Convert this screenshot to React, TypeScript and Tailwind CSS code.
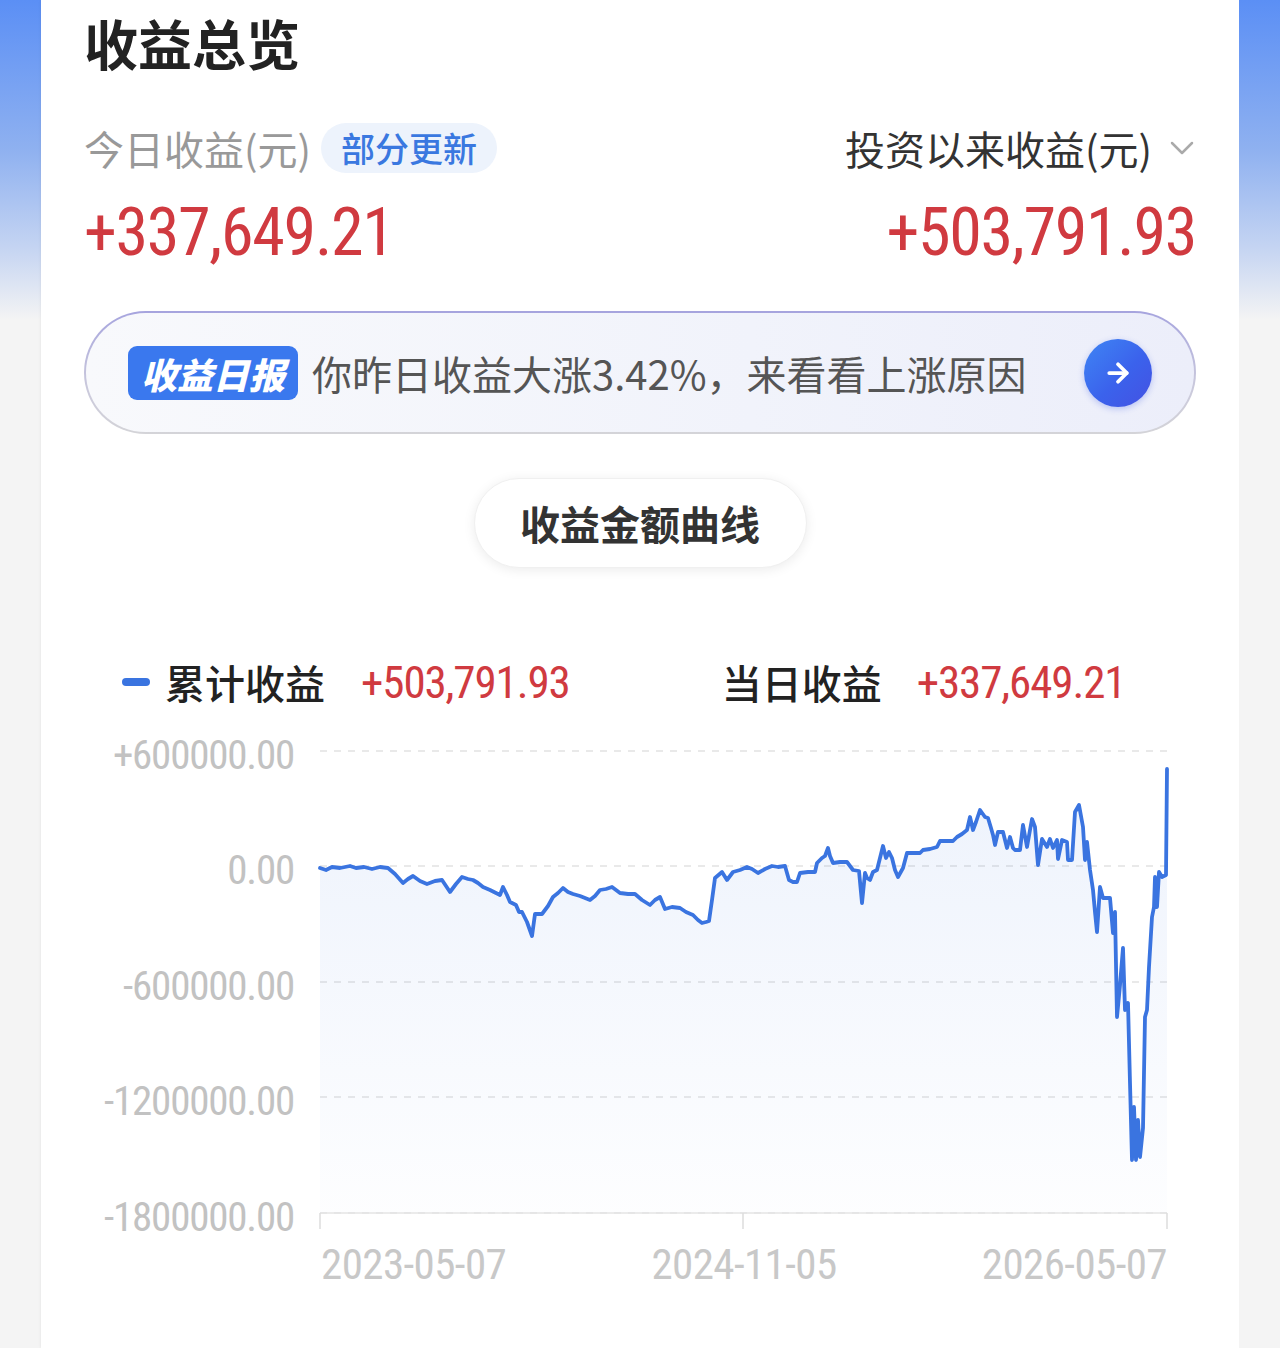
import { ArrowRight, ChevronDown } from "lucide-react";

const cjk = { fontFamily: '"Noto Sans CJK SC", "Noto Sans", sans-serif' };
const num = { fontFamily: '"Liberation Sans Narrow", "Roboto Condensed", "DejaVu Sans Condensed", "Liberation Sans", sans-serif' };

// traced from the reference curve, page coordinates
const pts: [number, number][] = [
  [320, 868], [326, 870], [332, 867], [340, 868], [350, 866], [356, 868], [364, 867], [372, 869], [380, 867], [388, 868],
  [395, 874], [403, 883], [408, 879], [413, 876], [420, 881], [427, 884], [435, 881], [442, 880], [446, 886], [450, 892],
  [456, 884], [462, 877], [468, 879], [473, 880], [478, 883], [483, 887], [490, 890], [500, 895], [503, 887], [507, 895],
  [510, 902], [516, 905], [519, 912], [522, 912], [527, 922], [532, 936], [535, 914], [542, 914], [548, 906], [553, 897],
  [558, 893], [563, 888], [568, 892], [573, 894], [580, 896], [590, 900], [595, 896], [600, 890], [606, 889], [612, 887],
  [620, 893], [628, 894], [635, 894], [642, 900], [650, 905], [655, 900], [660, 897], [665, 909], [672, 907], [680, 908],
  [686, 912], [693, 915], [698, 920], [702, 923], [706, 922], [709, 921], [712, 900], [715, 878], [722, 872], [727, 880],
  [733, 872], [740, 870], [747, 867], [752, 869], [758, 873], [765, 869], [772, 866], [778, 867], [785, 866], [789, 880],
  [793, 882], [797, 882], [800, 873], [808, 872], [815, 872], [817, 863], [822, 858], [825, 856], [828, 848], [830, 856],
  [833, 863], [840, 862], [847, 862], [853, 870], [859, 871], [862, 903], [865, 873], [867, 878], [870, 880], [873, 872],
  [877, 870], [880, 858], [883, 846], [886, 858], [889, 852], [892, 858], [895, 870], [898, 877], [903, 868], [907, 853],
  [913, 853], [920, 853], [923, 850], [930, 849], [937, 847], [940, 841], [947, 841], [953, 841], [957, 837], [962, 834],
  [967, 830], [970, 817], [973, 830], [976, 822], [980, 810], [985, 817], [988, 818], [991, 828], [993, 835], [995, 845],
  [998, 832], [1003, 832], [1007, 848], [1010, 837], [1013, 848], [1015, 850], [1020, 850], [1023, 825], [1027, 847],
  [1030, 830], [1032, 819], [1035, 827], [1038, 865], [1042, 839], [1047, 847], [1050, 839], [1053, 848], [1057, 840],
  [1058, 859], [1062, 840], [1067, 842], [1068, 860], [1072, 860], [1075, 812], [1079, 805], [1083, 827], [1085, 860],
  [1087, 842], [1090, 870], [1093, 890], [1095, 912], [1097, 932], [1100, 887], [1103, 898], [1110, 898], [1113, 933],
  [1115, 912], [1117, 1017], [1120, 985], [1123, 948], [1125, 1010], [1128, 1003], [1130, 1083], [1132, 1160], [1134, 1107],
  [1136, 1160], [1138, 1120], [1140, 1157], [1143, 1128], [1145, 1017], [1147, 1010], [1149, 967], [1152, 917], [1154, 907],
  [1155, 877], [1157, 907], [1159, 872], [1162, 877], [1166, 875], [1167, 769],
];

const line = pts.map(([x, y], i) => `${i ? "L" : "M"}${x} ${y}`).join(" ");
const area = `${line} L1167 1213 L320 1213 Z`;

const grid = [
  { y: 751, label: "+600000.00" },
  { y: 866, label: "0.00" },
  { y: 982, label: "-600000.00" },
  { y: 1097, label: "-1200000.00" },
  { y: 1213, label: "-1800000.00" },
];

function Chart() {
  return (
    <svg width="1198" height="560" viewBox="41 730 1198 560" className="block mt-[18px]">
      <defs>
        <linearGradient id="fill" x1="0" y1="0" x2="0" y2="1">
          <stop offset="0%" stopColor="#3a74e0" stopOpacity="0.09" />
          <stop offset="100%" stopColor="#3a74e0" stopOpacity="0.01" />
        </linearGradient>
      </defs>
      {grid.map((g) => (
        <g key={g.label}>
          <line x1="320" x2="1167" y1={g.y} y2={g.y} stroke="#e2e2e2" strokeWidth="1.5" strokeDasharray="7 7" />
          <text x="294" y={g.y + 18} textAnchor="end" fontSize="41" fill="#c2c2c2" letterSpacing="-1.2" style={num}>
            {g.label}
          </text>
        </g>
      ))}
      <path d={area} fill="url(#fill)" />
      <path d={line} fill="none" stroke="#3a74e0" strokeWidth="3.8" strokeLinejoin="round" strokeLinecap="round" />
      <line x1="320" x2="1167" y1="1213" y2="1213" stroke="#e4e4e4" strokeWidth="1.5" />
      {[320, 743, 1167].map((x) => (
        <line key={x} x1={x} x2={x} y1="1213" y2="1229" stroke="#dcdcdc" strokeWidth="1.5" />
      ))}
      <text x="321" y="1279" fontSize="43" fill="#c8c8c8" letterSpacing="-0.6" style={num}>2023-05-07</text>
      <text x="744" y="1279" fontSize="43" fill="#c8c8c8" letterSpacing="-0.6" textAnchor="middle" style={num}>2024-11-05</text>
      <text x="1167" y="1279" fontSize="43" fill="#c8c8c8" letterSpacing="-0.6" textAnchor="end" style={num}>2026-05-07</text>
    </svg>
  );
}

export default function App() {
  const gutter = "bg-[linear-gradient(to_bottom,#5b8ff5_0px,#8fb1f0_150px,#c6d5f2_250px,#f4f4f4_320px)]";
  return (
    <div className="grid grid-cols-[41px_1fr_41px] min-h-[1348px] bg-[#f4f4f4]" style={cjk}>
      <div className={gutter} />
      <div className="bg-white shadow-[0_0_3px_rgba(0,0,0,0.08)] flex flex-col">
        <div className="px-[43px]">
          <div className="h-[86px] flex items-center">
            <h1 className="text-[54px] font-bold leading-none text-[#222]">收益总览</h1>
          </div>

          <div className="mt-[37px] h-[50px] flex items-center justify-between">
            <div className="flex items-center gap-[10px]">
              <span className="text-[40px] leading-none text-[#999]">今日收益(元)</span>
              <span className="h-[50px] px-[20px] rounded-full bg-[#edf3fc] text-[#3a78e0] text-[34px] font-medium leading-none flex items-center">
                部分更新
              </span>
            </div>
            <div className="flex items-center gap-[10px]">
              <span className="text-[40px] leading-none text-[#333]">投资以来收益(元)</span>
              <ChevronDown size={40} strokeWidth={1.5} className="text-[#aaa] -mr-[6px]" />
            </div>
          </div>

          <div className="mt-[27px] flex justify-between text-[66px] leading-none tracking-[-1.3px] text-[#d03a40]" style={num}>
            <span>+337,649.21</span>
            <span>+503,791.93</span>
          </div>

          <div className="mt-[45px] h-[123px] p-[2px] rounded-full bg-[linear-gradient(to_bottom,#a6a4de,#c9c8dc_60%,#d4d4d8)]">
            <div className="h-full rounded-full bg-[linear-gradient(to_right,#f8f9fc,#f1f3fb_60%,#eceefa)] flex items-center pl-[42px] pr-[42px]">
              <span className="h-[54px] px-[13px] rounded-[9px] bg-[#3a78ee] text-white text-[36px] font-black italic leading-none flex items-center">
                收益日报
              </span>
              <span className="ml-[14px] text-[40px] leading-none text-[#555] flex-1">你昨日收益大涨3.42%，来看看上涨原因</span>
              <span className="w-[68px] h-[68px] rounded-full bg-[linear-gradient(135deg,#3f86f4,#3b62ec_55%,#4451e2)] shadow-[0_2px_6px_rgba(60,90,230,0.3)] flex items-center justify-center">
                <ArrowRight size={30} strokeWidth={3} className="text-white" />
              </span>
            </div>
          </div>

          <div className="mt-[44px] flex justify-center">
            <div className="h-[90px] w-[333px] rounded-full bg-white border border-[#f0f0f0] shadow-[0_2px_12px_rgba(0,0,0,0.08)] flex items-center justify-center text-[40px] font-bold leading-none text-[#333]">
              收益金额曲线
            </div>
          </div>

          <div className="mt-[84px] h-[60px] flex items-center pl-[38px]">
            <span className="w-[28px] h-[8px] rounded-full bg-[#3a74e0]" />
            <span className="ml-[15px] text-[40px] font-medium leading-none text-[#222]">累计收益</span>
            <span className="ml-[36px] text-[45px] leading-none tracking-[-1.1px] text-[#d03a40]" style={num}>+503,791.93</span>
            <span className="ml-[152px] text-[40px] font-medium leading-none text-[#222]">当日收益</span>
            <span className="ml-[35px] text-[45px] leading-none tracking-[-1.1px] text-[#d03a40]" style={num}>+337,649.21</span>
          </div>
        </div>

        <Chart />
      </div>
      <div className={gutter} />
    </div>
  );
}
